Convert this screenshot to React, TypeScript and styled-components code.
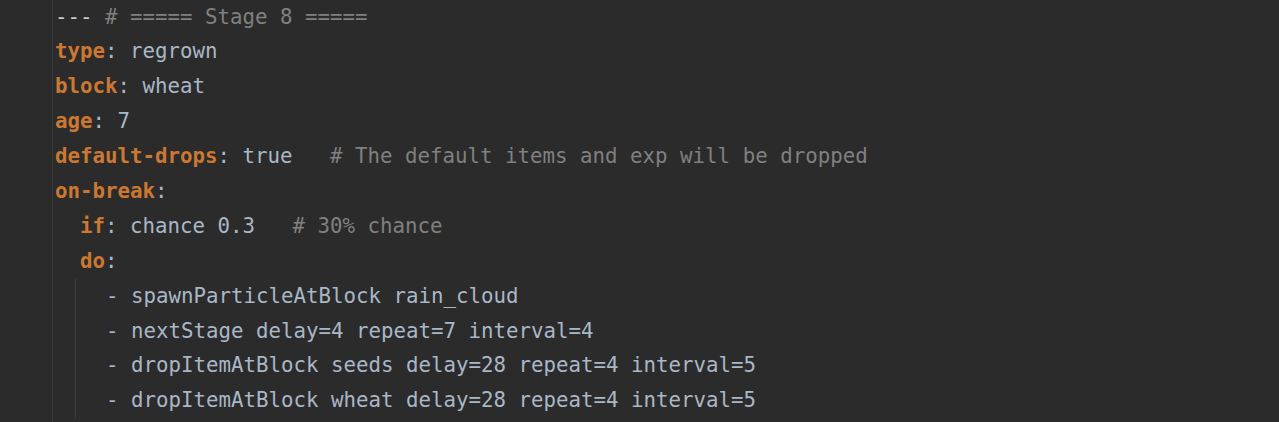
import React from "react";
import styled, { createGlobalStyle } from "styled-components";

const Global = createGlobalStyle`
  html, body { margin: 0; padding: 0; background: #2b2b2b; }
  body { overflow: hidden; }
`;

const Editor = styled.div`
  display: flex;
  width: 1279px;
  height: 422px;
  background: #2b2b2b;
  overflow: hidden;
`;

const Gutter = styled.div`
  width: 52px;
  flex: none;
  background: #2b2b2b;
  border-right: 1px solid #3a3a3a;
`;

const Code = styled.div`
  flex: 1;
  padding-left: 2px;
  margin-top: -0.5px;
  font-family: "DejaVu Sans Mono", "Liberation Mono", monospace;
  font-size: 20.78px;
  color: #a9b7c6;
`;

const Line = styled.div<{ $indent?: number }>`
  height: 34.9px;
  line-height: 34.9px;
  white-space: pre;
  padding-left: ${(p) => (p.$indent ?? 0) * 12.5}px;
`;

const Block = styled.div`
  margin-left: 20px;
  padding-left: 30px;
  border-left: 1px solid #3d3d3d;
`;

const Key = styled.span`
  color: #cc7832;
  font-weight: bold;
`;

const Comment = styled.span`
  color: #808080;
`;

const Marker = styled.span`
  color: #cccccc;
`;

export default function App() {
  return (
    <>
      <Global />
      <Editor>
        <Gutter />
        <Code>
          <Line>
            <Marker>---</Marker> <Comment># ===== Stage 8 =====</Comment>
          </Line>
          <Line>
            <Key>type</Key>: regrown
          </Line>
          <Line>
            <Key>block</Key>: wheat
          </Line>
          <Line>
            <Key>age</Key>: 7
          </Line>
          <Line>
            <Key>default-drops</Key>: true{"   "}
            <Comment># The default items and exp will be dropped</Comment>
          </Line>
          <Line>
            <Key>on-break</Key>:
          </Line>
          <Line $indent={2}>
            <Key>if</Key>: chance 0.3{"   "}
            <Comment># 30% chance</Comment>
          </Line>
          <Line $indent={2}>
            <Key>do</Key>:
          </Line>
          <Block>
            <Line>- spawnParticleAtBlock rain_cloud</Line>
            <Line>- nextStage delay=4 repeat=7 interval=4</Line>
            <Line>- dropItemAtBlock seeds delay=28 repeat=4 interval=5</Line>
            <Line>- dropItemAtBlock wheat delay=28 repeat=4 interval=5</Line>
          </Block>
        </Code>
      </Editor>
    </>
  );
}
